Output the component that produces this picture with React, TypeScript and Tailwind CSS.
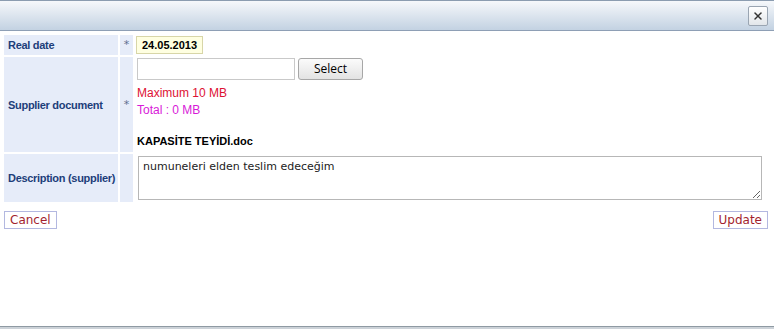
import { X } from 'lucide-react';

export default function App() {
  const label = "p-0 pl-[4px] bg-[#e6ecf9] text-[#1d3e7a] font-bold text-[11px] leading-[14px] tracking-[-0.3px] whitespace-nowrap overflow-hidden font-['Liberation_Sans',sans-serif]";
  const star = 'p-0 bg-[#e6ecf9] text-[#5c6f8f] text-[11px] leading-[14px] text-center';

  return (
    <div className="w-[774px] h-[329px] bg-white flex flex-col font-['DejaVu_Sans',sans-serif] overflow-hidden">
      <div className="h-[31px] shrink-0 border-t border-[#8b9cb0] border-b border-b-[#8e9fb5] bg-gradient-to-b from-[#f6f8fb] to-[#c3d2e2] flex items-center justify-end pr-[6px]">
        <button className="w-[20px] h-[20px] border border-[#9aa5b2] rounded-[2px] bg-gradient-to-b from-white to-[#e2e6ea] flex items-center justify-center">
          <X size={12} strokeWidth={3} className="text-[#333]" />
        </button>
      </div>

      <div className="px-[4px] pt-[2px]">
        <table className="table-fixed w-[calc(100%+4px)] border-separate border-spacing-[2px] -mx-[2px] text-[11px] leading-[14px]">
          <colgroup>
            <col className="w-[114px]" />
            <col className="w-[13px]" />
            <col />
          </colgroup>
          <tbody>
            <tr>
              <td className={`${label} h-[20px]`}>Real date</td>
              <td className={star}>*</td>
              <td className="p-0 pl-px">
                <div className="flex">
                  <span className="border border-[#d8d6a8] bg-[#ffffe1] text-[11px] font-bold px-[5px] leading-[16px] font-['Liberation_Sans',sans-serif]">24.05.2013</span>
                </div>
              </td>
            </tr>
            <tr>
              <td className={`${label} h-[95px]`}>Supplier document</td>
              <td className={star}>*</td>
              <td className="p-0 align-top pl-[2px] pt-px">
                <div className="flex gap-[3px]">
                  <input className="w-[158px] h-[22px] border border-[#c9c9c9] bg-white" />
                  <button className="w-[65px] h-[22px] border border-[#a7a7a7] rounded-[3px] bg-gradient-to-b from-[#fbfbfb] to-[#e3e3e3] text-[12px] text-black font-['Open_Sans',sans-serif]">Select</button>
                </div>
                <div className="mt-[5px] text-[12px] leading-[17px] font-['Liberation_Sans',sans-serif] text-[#dd1133]">Maximum 10 MB</div>
                <div className="text-[12px] leading-[17px] font-['Liberation_Sans',sans-serif] text-[#d81ad8]">Total : 0 MB</div>
                <div className="mt-[16px] text-[11px] leading-[13px] font-bold text-black font-['Liberation_Sans',sans-serif]">KAPASİTE TEYİDİ.doc</div>
              </td>
            </tr>
            <tr>
              <td className={`${label} h-[48px]`}>Description (supplier)</td>
              <td className={star}></td>
              <td className="p-0 pl-[3px] pr-[8px]">
                <textarea
                  defaultValue="numuneleri elden teslim edeceğim"
                  className="w-full h-[44px] border border-[#b7b7b7] text-[11px] leading-[14px] px-[4px] py-[3px] resize-y block text-[#222]"
                />
              </td>
            </tr>
          </tbody>
        </table>

        <div className="flex justify-between mt-[7px]">
          <button className="h-[18px] px-[5px] border border-[#b3b8e0] bg-white text-[#a31f2e] text-[12px] leading-[16px]">Cancel</button>
          <button className="h-[18px] px-[5px] mr-[2px] border border-[#b3b8e0] bg-white text-[#a31f2e] text-[12px] leading-[16px]">Update</button>
        </div>
      </div>

      <div className="flex-1" />
      <div className="h-[3px] shrink-0 border-t border-[#8f9aa3] bg-[#ccd2d8]" />
    </div>
  );
}
